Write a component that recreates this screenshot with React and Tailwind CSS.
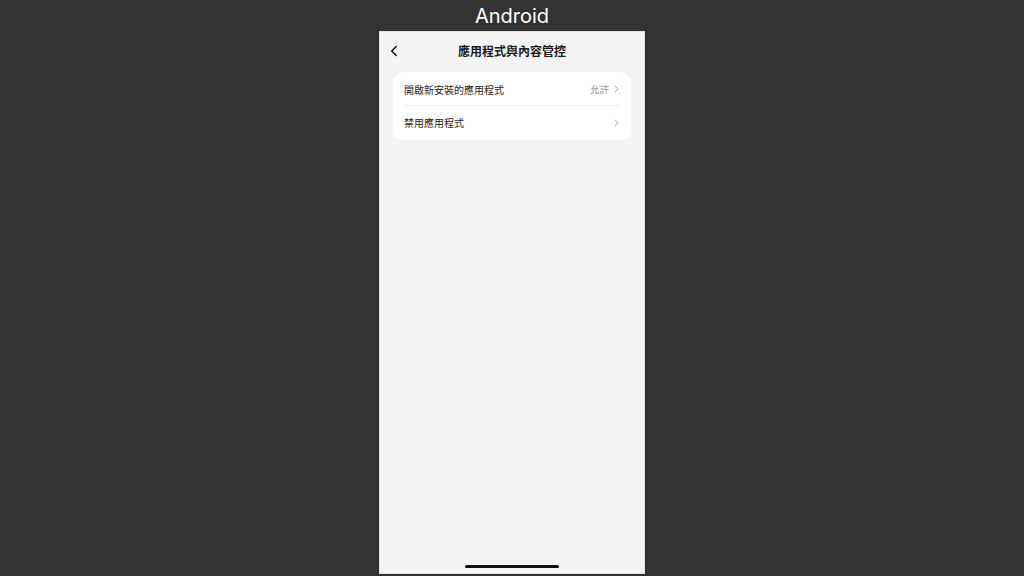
import { ChevronLeft } from 'lucide-react';

const font = { fontFamily: '"Noto Sans CJK TC", "Noto Sans", sans-serif' };

function Arrow() {
  return (
    <svg width="5" height="8" viewBox="0 0 5 8" fill="none" className="mr-[1px]">
      <path d="M1 1l3 3-3 3" stroke="#a8a8a8" strokeWidth="1" strokeLinecap="round" strokeLinejoin="round" />
    </svg>
  );
}

function Row({ label, value, divider }) {
  return (
    <div className="px-[11px]">
      <div className={`flex h-[33px] items-center justify-between ${divider ? 'border-b border-[#f0f0f0]' : ''}`}>
        <span className="text-[10px] text-[#262626]">{label}</span>
        <span className="flex items-center gap-[5px] text-[9.5px] text-[#999]">
          {value}
          <Arrow />
        </span>
      </div>
    </div>
  );
}

export default function App() {
  return (
    <div className="flex h-[576px] w-[1024px] flex-col items-center bg-[#333333]" style={font}>
      <div className="flex h-[31px] items-center justify-center pt-[1px] font-['Inter'] text-[20px] leading-none text-white">
        Android
      </div>
      <div className="flex h-[543px] w-[266px] flex-col border border-[#e2e2e2] bg-[#f4f4f4]">
        <div className="relative flex h-[37px] items-center justify-center">
          <ChevronLeft className="absolute left-[5px] top-[10px] h-[18px] w-[18px] text-[#111]" strokeWidth={2} />
          <span className="text-[12px] font-bold text-[#1a1a1a]">應用程式與內容管控</span>
        </div>
        <div className="mx-[13px] mt-[3px] rounded-[10px] bg-white py-[1px]">
          <Row label="開啟新安裝的應用程式" value="允許" divider />
          <Row label="禁用應用程式" value="" />
        </div>
        <div className="flex-1" />
        <div className="flex justify-center pb-[5px]">
          <div className="h-[3px] w-[94px] rounded-full bg-[#111]" />
        </div>
      </div>
    </div>
  );
}
